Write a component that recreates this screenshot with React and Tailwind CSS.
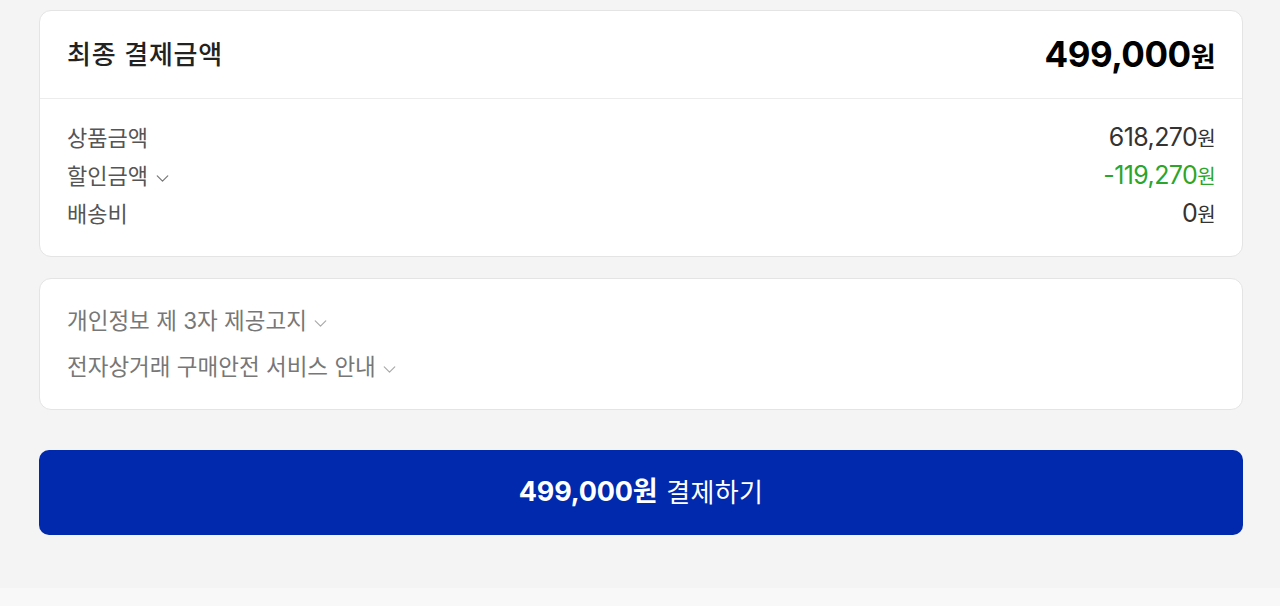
import React from 'react';
import { ChevronDown } from 'lucide-react';

const font = { fontFamily: 'Inter, "Noto Sans CJK KR", sans-serif' };

const Row = ({ label, value, green, toggle }) => (
  <div className="flex items-center justify-between h-[38px]">
    <div className="flex items-center gap-[4px] text-[22px] text-[#555]">
      {label}
      {toggle && <ChevronDown className="w-[21px] h-[21px] text-[#777] mt-1" strokeWidth={1.4} />}
    </div>
    <div className={`text-[25px] tracking-[-0.6px] ${green ? 'text-[#2ba52b]' : 'text-[#333]'}`}>
      {value}
      <span className="text-[20px]">원</span>
    </div>
  </div>
);

const App = () => {
  return (
    <div className="w-[1280px] h-[606px] bg-[#f4f4f4] flex flex-col" style={font}>
      <div className="flex-1 pl-[39px] pr-[37px] pt-[10px]">
        <div className="bg-white border border-[#e4e4e4] rounded-[12px]">
          <div className="flex items-center justify-between h-[88px] px-[27px] border-b border-[#ececec]">
            <span className="text-[26px] font-medium text-[#222] tracking-[0.8px]">최종 결제금액</span>
            <span className="text-[35px] font-bold text-black tracking-[-0.5px]">
              499,000<span className="text-[27px]">원</span>
            </span>
          </div>
          <div className="px-[27px] pt-[20px] pb-[23px]">
            <Row label="상품금액" value="618,270" />
            <Row label="할인금액" value="-119,270" green toggle />
            <Row label="배송비" value="0" />
          </div>
        </div>

        <div className="mt-[21px] bg-white border border-[#e4e4e4] rounded-[12px] px-[27px] py-[19px]">
          <div className="flex items-center gap-[3px] h-[46px] text-[22.5px] text-[#777]">
            개인정보 제 3자 제공고지
            <ChevronDown className="w-[21px] h-[21px] text-[#aaa] mt-1" strokeWidth={1.4} />
          </div>
          <div className="flex items-center gap-[3px] h-[46px] text-[22.5px] text-[#777]">
            전자상거래 구매안전 서비스 안내
            <ChevronDown className="w-[21px] h-[21px] text-[#aaa] mt-1" strokeWidth={1.4} />
          </div>
        </div>

        <button className="mt-[40px] w-full h-[85px] bg-[#0029ad] rounded-[10px] flex items-center justify-center gap-[9px] text-white">
          <span className="text-[27px] font-bold tracking-[-0.2px]">499,000원</span>
          <span className="text-[26px] tracking-[0.3px]">결제하기</span>
        </button>
      </div>
      <div className="h-[18px] bg-[#f8f8f8]" />
    </div>
  );
};

export default App;
